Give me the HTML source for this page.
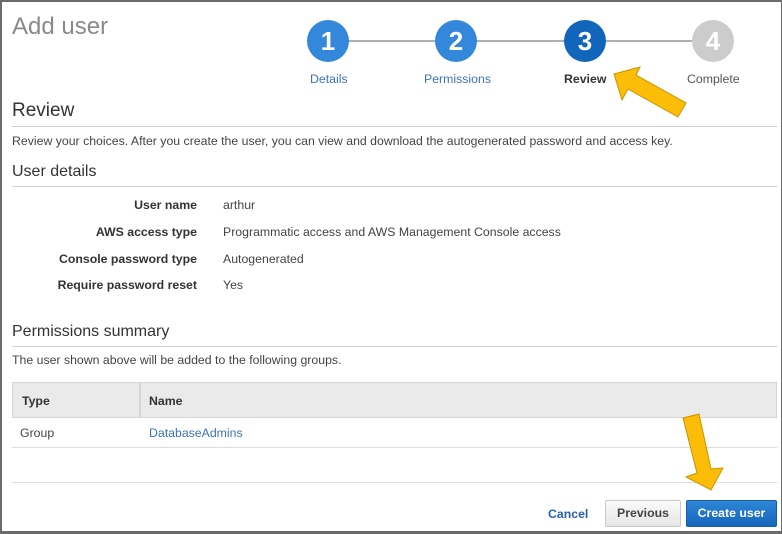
<!DOCTYPE html>
<html><head><meta charset="utf-8"><style>
*{margin:0;padding:0;box-sizing:border-box}
body{width:782px;height:534px;overflow:hidden;background:#fff;font-family:"Liberation Sans",Arial,sans-serif;position:relative;color:#444}
.frame{position:absolute;left:0;top:0;width:782px;height:534px;border:2px solid #6b6b6b;border-right-width:1px;border-bottom-width:3px}
.a{position:absolute;white-space:nowrap}
.circ{position:absolute;width:42px;height:42px;border-radius:50%;color:#fff;font-weight:bold;font-size:26px;text-align:center;line-height:42px}
.line{position:absolute;height:1px;background:#d0d0d0;left:12px;width:765px}
.lbl{position:absolute;width:197px;left:0;text-align:right;font-weight:bold;font-size:12.3px;color:#333}
.val{position:absolute;left:223px;font-size:12.3px;color:#444}
h2{position:absolute;font-weight:normal;font-size:17px;color:#333;left:12px}
</style></head><body>
<div class="a" style="left:12px;top:13px;font-size:24px;color:#8a8a8a">Add user</div>
<div style="position:absolute;left:328px;top:40px;width:385px;height:2px;background:#b0b0b0"></div>
<div class="circ" style="left:307px;top:20px;background:#3388db">1</div>
<div class="circ" style="left:435px;top:20px;background:#3388db">2</div>
<div class="circ" style="left:564px;top:20px;background:#1166bb">3</div>
<div class="circ" style="left:692px;top:20px;background:#cccccc">4</div>
<div class="a" style="left:310px;top:72px;font-size:12.3px;color:#3b73b9">Details</div>
<div class="a" style="left:424px;top:72px;font-size:12.3px;color:#3b73b9">Permissions</div>
<div class="a" style="left:564px;top:72px;font-size:12.3px;font-weight:bold;color:#333">Review</div>
<div class="a" style="left:687px;top:72px;font-size:12.3px;color:#555">Complete</div>
<h2 style="top:100px;font-size:19px">Review</h2>
<div class="line" style="top:126px"></div>
<div class="a" style="left:12px;top:134px;font-size:12.3px">Review your choices. After you create the user, you can view and download the autogenerated password and access key.</div>
<h2 style="top:163px;font-size:16px">User details</h2>
<div class="line" style="top:186px"></div>
<div class="lbl" style="top:198px">User name</div><div class="val" style="top:198px">arthur</div>
<div class="lbl" style="top:225px">AWS access type</div><div class="val" style="top:225px">Programmatic access and AWS Management Console access</div>
<div class="lbl" style="top:252px">Console password type</div><div class="val" style="top:252px">Autogenerated</div>
<div class="lbl" style="top:278px">Require password reset</div><div class="val" style="top:278px">Yes</div>
<h2 style="top:323px;font-size:16px">Permissions summary</h2>
<div class="line" style="top:346px"></div>
<div class="a" style="left:12px;top:353px;font-size:12.3px">The user shown above will be added to the following groups.</div>
<div style="position:absolute;left:12px;top:382px;width:765px;height:36px;background:#eaeaea;border:1px solid #d6d6d6"></div>
<div style="position:absolute;left:139px;top:382px;width:2px;height:36px;background:#d6d6d6"></div>
<div class="a" style="left:22px;top:394px;font-size:12.3px;font-weight:bold;color:#333">Type</div>
<div class="a" style="left:149px;top:394px;font-size:12.3px;font-weight:bold;color:#333">Name</div>
<div class="a" style="left:20px;top:426px;font-size:12.3px">Group</div>
<div class="a" style="left:149px;top:426px;font-size:12.3px;color:#3b73b9">DatabaseAdmins</div>
<div class="line" style="top:447px;background:#ddd"></div>
<div class="line" style="top:482px;background:#ddd"></div>
<div class="a" style="left:548px;top:507px;font-size:12.3px;font-weight:bold;color:#2a5fa8">Cancel</div>
<div style="position:absolute;left:605px;top:500px;width:76px;height:27px;border:1px solid #c8c8c8;border-radius:2px;background:linear-gradient(#fafafa,#e6e6e6);font-size:12.3px;font-weight:bold;color:#444;text-align:center;line-height:25px">Previous</div>
<div style="position:absolute;left:686px;top:500px;width:91px;height:27px;border:1px solid #1a5fa6;border-radius:2px;background:linear-gradient(#2e86d6,#1466bb);font-size:12.3px;font-weight:bold;color:#fff;text-align:center;line-height:25px">Create user</div>
<svg style="position:absolute;left:0;top:0" width="782" height="534">
<polygon points="614,74 640,67 636,75 686,103 678,117 628,89 622,100" fill="#fbbd08" stroke="#c89400" stroke-width="1"/>
<polygon points="683,418 699,414 711,469 723,468 711,490 686,477 697,473" fill="#fbbd08" stroke="#c89400" stroke-width="1"/>
</svg>
<div class="frame"></div>
</body></html>
